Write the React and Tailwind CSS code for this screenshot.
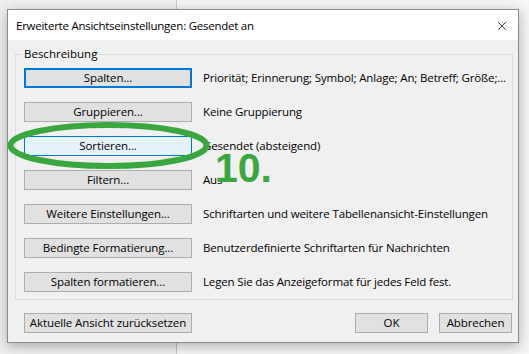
import { X } from 'lucide-react'

const rows = [
  { label: 'Spalten...', text: 'Priorität; Erinnerung; Symbol; Anlage; An; Betreff; Größe;...', state: 'default' },
  { label: 'Gruppieren...', text: 'Keine Gruppierung' },
  { label: 'Sortieren...', text: 'Gesendet (absteigend)', state: 'hover' },
  { label: 'Filtern...', text: 'Aus' },
  { label: 'Weitere Einstellungen...', text: 'Schriftarten und weitere Tabellenansicht-Einstellungen' },
  { label: 'Bedingte Formatierung...', text: 'Benutzerdefinierte Schriftarten für Nachrichten' },
  { label: 'Spalten formatieren...', text: 'Legen Sie das Anzeigeformat für jedes Feld fest.' },
]

function WinButton({ children, state, className = '' }) {
  let look = 'bg-[#e1e1e1] border border-[#adadad]'
  if (state === 'default') look = 'bg-[#e1e1e1] border-2 border-[#0078d7]'
  if (state === 'hover') look = 'bg-[#e5f1fb] border border-[#0078d7]'
  return (
    <div className={`h-[20px] flex items-center justify-center whitespace-nowrap text-[11.5px] tracking-[-0.1px] text-black ${look} ${className}`}>
      {children}
    </div>
  )
}

export default function App() {
  return (
    <div
      className="relative w-[529px] h-[354px] overflow-hidden flex"
      style={{ fontFamily: '"Open Sans", "Noto Sans", sans-serif' }}
    >
      {/* app behind the dialog */}
      <div className="w-[177px] h-full bg-[#f0f0f0] border-r border-[#c8c8c8]" />
      <div className="flex-1 h-full bg-[#f6f6f6]" />

      {/* dialog */}
      <div className="absolute left-[7px] top-[9px] w-[512px] h-[334px] border border-[#8a8a8a] bg-[#f0f0f0] shadow-[0_3px_12px_rgba(0,0,0,0.3)] flex flex-col">
        <div className="h-[30px] bg-white flex items-center justify-between pl-[8px] pr-[9px] pt-[2px] shrink-0">
          <span className="text-[11.5px] text-black tracking-[-0.25px]">Erweiterte Ansichtseinstellungen: Gesendet an</span>
          <X className="w-[14px] h-[14px] text-black" strokeWidth={1.3} />
        </div>

        <div className="flex flex-col pl-[7px] pr-[5px] pt-[14px]">
          <div className="relative border border-[#dcdcdc] pt-[13px] pb-[7px] px-[8px] flex flex-col gap-[14px]">
            <span className="absolute left-[6px] -top-[9px] px-[2px] bg-[#f0f0f0] text-[11.5px] leading-[16px] text-black">
              Beschreibung
            </span>
            {rows.map((r) => (
              <div key={r.label} className="flex items-center gap-[11px]">
                <WinButton state={r.state} className="w-[168px] shrink-0">{r.label}</WinButton>
                <span className="text-[11.5px] text-black whitespace-nowrap tracking-[-0.15px]">{r.text}</span>
              </div>
            ))}
          </div>

          <div className="flex items-center pt-[13px] pl-[9px] pr-[1px]">
            <WinButton className="w-[168px]">Aktuelle Ansicht zurücksetzen</WinButton>
            <div className="flex-1" />
            <WinButton className="w-[73px]">OK</WinButton>
            <WinButton className="w-[73px] ml-[11px]">Abbrechen</WinButton>
          </div>
        </div>
      </div>

      {/* green annotation */}
      <svg className="absolute left-0 top-0 pointer-events-none" width="529" height="354" viewBox="0 0 529 354">
        <ellipse cx="108.5" cy="145.5" rx="98" ry="20.5" fill="none" stroke="#3aa640" strokeWidth="6" />
      </svg>
      <span
        className="absolute left-[215px] top-[144px] text-[41px] leading-[48px] font-bold text-[#3aa640]"
        style={{ fontFamily: '"Liberation Sans", Arial, sans-serif' }}
      >
        10.
      </span>
    </div>
  )
}
